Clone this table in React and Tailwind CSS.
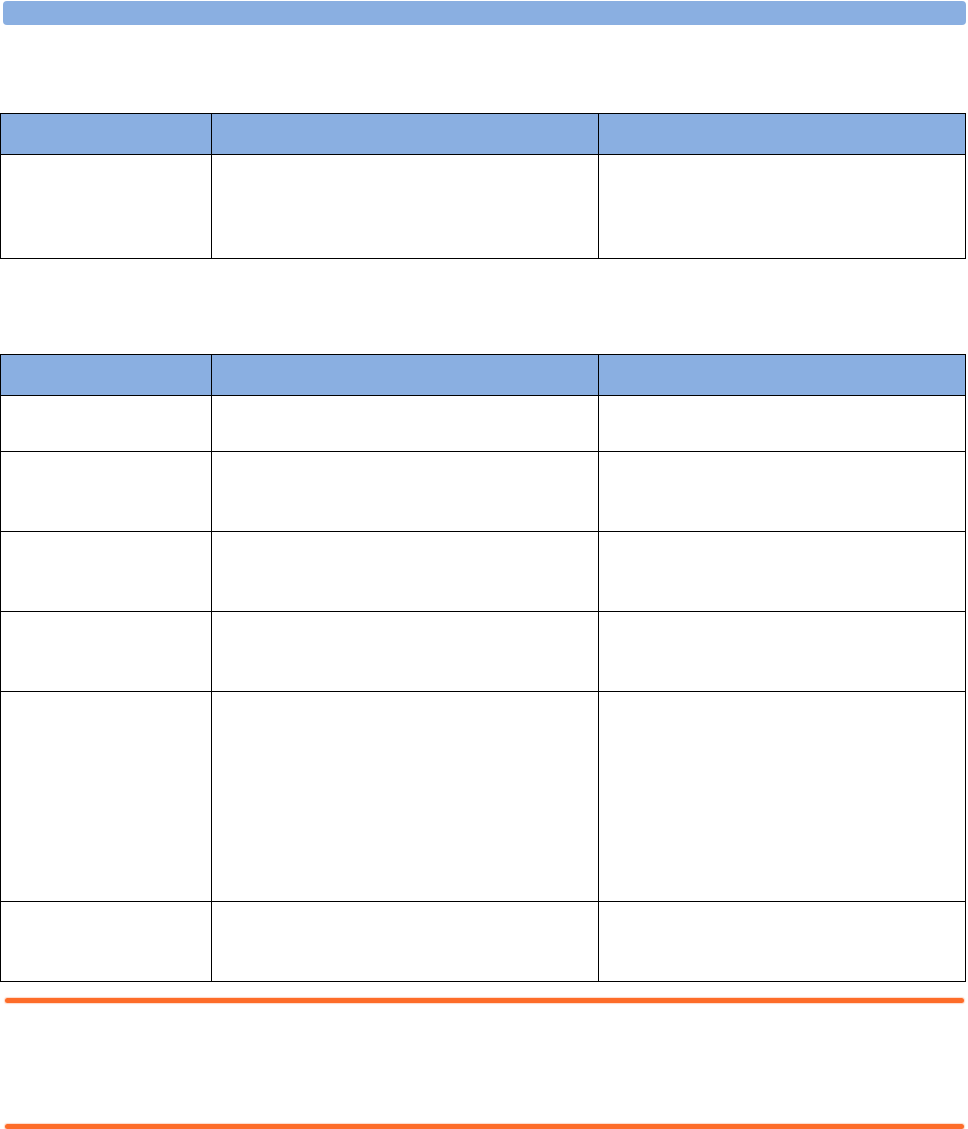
import React from 'react';

const cols = 'grid grid-cols-[211px_387px_367px]';

const Row = ({ h, header }) => (
  <div className={cols}>
    <div className={`border-r border-b border-black ${header ? 'bg-[#8aafe1]' : 'bg-white'}`} style={{ height: h }} />
    <div className={`border-r border-b border-black ${header ? 'bg-[#8aafe1]' : 'bg-white'}`} style={{ height: h }} />
    <div className={`border-r border-b border-black ${header ? 'bg-[#8aafe1]' : 'bg-white'}`} style={{ height: h }} />
  </div>
);

const Table = ({ rows }) => (
  <div className="w-[966px] border-t border-l border-black">
    <Row h={41} header />
    {rows.map((h, i) => (
      <Row key={i} h={h} />
    ))}
  </div>
);

export default function App() {
  return (
    <div className="w-[968px] h-[1129px] bg-white font-['Liberation_Sans',sans-serif]">
      <div className="pt-px pl-[3px] pr-[2px]">
        <div className="h-[24px] rounded-[4px] bg-[#8aafe1]" />
      </div>
      <div className="mt-[88px]">
        <Table rows={[104]} />
      </div>
      <div className="mt-[95px]">
        <Table rows={[56, 80, 80, 80, 210, 80]} />
      </div>
      <div className="mt-[16px] pl-[5px] pr-[4px]">
        <div className="h-[5px] rounded-full bg-[#fd6c29] shadow-[0_0_1px_1px_rgba(253,108,41,0.25)]" />
      </div>
      <div className="mt-[121px] pl-[5px] pr-[4px]">
        <div className="h-[5px] rounded-full bg-[#fd6c29] shadow-[0_0_1px_1px_rgba(253,108,41,0.25)]" />
      </div>
    </div>
  );
}
